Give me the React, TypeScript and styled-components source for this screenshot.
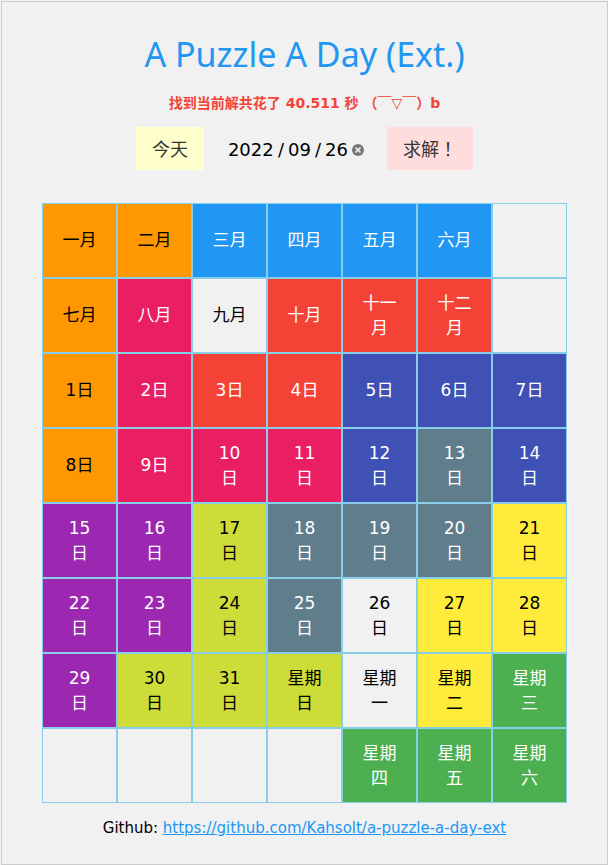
import React, { useState } from "react";
import styled, { createGlobalStyle } from "styled-components";

const GlobalStyle = createGlobalStyle`
  * { box-sizing: border-box; }
  html, body, #root { height: 100%; }
  body {
    margin: 0;
    background: #f1f1f1;
    color: #000;
    font-family: "DejaVu Sans", "Noto Sans CJK SC", sans-serif;
    font-size: 15px;
    line-height: 24px;
  }
`;

const Page = styled.main`
  display: flex;
  flex-direction: column;
  align-items: center;
  min-height: 100%;
  padding-top: 1px;
  padding-left: 1px;
`;

const Panel = styled.div`
  display: flex;
  flex-direction: column;
  align-items: center;
  flex: 1;
  width: 100%;
  padding: 25px 16px 16px;
  border: 1px solid #ccc;
`;

const Title = styled.h1`
  margin: 0;
  color: #2196f3;
  font-family: "Noto Sans", sans-serif;
  font-size: 34px;
  font-weight: 400;
  line-height: 54px;
`;

const Status = styled.p`
  margin: 10px 0 12px;
  color: #f44336;
  font-size: 14px;
  font-weight: 700;
  line-height: 24px;
  white-space: pre;
`;

const Toolbar = styled.form`
  display: flex;
  align-items: center;
  margin-bottom: 33px;
`;

const ActionButton = styled.button<{ $tone: string }>`
  padding: 9px 16px 7px;
  border: 0;
  background: ${(p) => p.$tone};
  color: #333;
  font: inherit;
  font-size: 18px;
  line-height: 27px;
  cursor: pointer;
`;

const CenteredMark = styled.span`
  font-family: "Noto Sans CJK TC", sans-serif;
  line-height: 1;
`;

const DateField = styled.fieldset`
  display: flex;
  align-items: center;
  gap: 4px;
  margin: 0;
  padding: 2px 23px 0 24px;
  border: 0;
  font-size: 18px;
`;

const DatePart = styled.input<{ $digits: number }>`
  width: ${(p) => (p.$digits === 4 ? 46 : 23)}px;
  padding: 0;
  border: 0;
  background: transparent;
  color: #000;
  font: inherit;
`;

const ClearButton = styled.button`
  display: flex;
  padding: 0;
  border: 0;
  background: none;
  cursor: pointer;
`;

const Board = styled.div`
  display: grid;
  grid-template-columns: repeat(7, minmax(0, 75px));
  grid-auto-rows: 75px;
  justify-content: center;
  width: 100%;
`;

const tones = {
  orange: ["#ff9800", "#000"],
  blue: ["#2196f3", "#fff"],
  pink: ["#e91e63", "#fff"],
  red: ["#f44336", "#fff"],
  indigo: ["#3f51b5", "#fff"],
  slate: ["#607d8b", "#fff"],
  purple: ["#9c27b0", "#fff"],
  lime: ["#cddc39", "#000"],
  yellow: ["#ffeb3b", "#000"],
  green: ["#4caf50", "#fff"],
  none: ["#f1f1f1", "#000"],
};

type Tone = keyof typeof tones;

const Cell = styled.div<{ $tone: Tone }>`
  display: flex;
  align-items: center;
  justify-content: center;
  padding: 0 18px;
  border: 1px solid #87ceeb;
  background: ${(p) => tones[p.$tone][0]};
  color: ${(p) => tones[p.$tone][1]};
  font-size: 17px;
  line-height: 25px;
  text-align: center;
`;

const Footer = styled.footer`
  margin-top: 13px;
`;

const RepoLink = styled.a`
  color: #2196f3;
`;

const cells: [string, Tone][] = [
  ["一月", "orange"], ["二月", "orange"], ["三月", "blue"], ["四月", "blue"], ["五月", "blue"], ["六月", "blue"], ["", "none"],
  ["七月", "orange"], ["八月", "pink"], ["九月", "none"], ["十月", "red"], ["十一月", "red"], ["十二月", "red"], ["", "none"],
  ["1日", "orange"], ["2日", "pink"], ["3日", "red"], ["4日", "red"], ["5日", "indigo"], ["6日", "indigo"], ["7日", "indigo"],
  ["8日", "orange"], ["9日", "pink"], ["10日", "pink"], ["11日", "pink"], ["12日", "indigo"], ["13日", "slate"], ["14日", "indigo"],
  ["15日", "purple"], ["16日", "purple"], ["17日", "lime"], ["18日", "slate"], ["19日", "slate"], ["20日", "slate"], ["21日", "yellow"],
  ["22日", "purple"], ["23日", "purple"], ["24日", "lime"], ["25日", "slate"], ["26日", "none"], ["27日", "yellow"], ["28日", "yellow"],
  ["29日", "purple"], ["30日", "lime"], ["31日", "lime"], ["星期日", "lime"], ["星期一", "none"], ["星期二", "yellow"], ["星期三", "green"],
  ["", "none"], ["", "none"], ["", "none"], ["", "none"], ["星期四", "green"], ["星期五", "green"], ["星期六", "green"],
];

export default function App() {
  const [date, setDate] = useState(["2022", "09", "26"]);
  const labels = ["年", "月", "日"];
  const today = () => {
    const now = new Date();
    setDate([
      String(now.getFullYear()),
      String(now.getMonth() + 1).padStart(2, "0"),
      String(now.getDate()).padStart(2, "0"),
    ]);
  };

  return (
    <>
      <GlobalStyle />
      <Page>
        <Panel>
          <Title>A Puzzle A Day (Ext.)</Title>
          <Status role="status">找到当前解共花了 40.511 秒 （￣▽￣）b</Status>
          <Toolbar onSubmit={(e) => e.preventDefault()}>
            <ActionButton type="button" $tone="#ffffcc" onClick={today}>今天</ActionButton>
            <DateField aria-label="日期">
              {date.map((part, i) => (
                <React.Fragment key={labels[i]}>
                  {i > 0 && <span>/</span>}
                  <DatePart
                    aria-label={labels[i]}
                    $digits={i === 0 ? 4 : 2}
                    maxLength={i === 0 ? 4 : 2}
                    value={part}
                    onChange={(e) => setDate(date.map((d, j) => (j === i ? e.target.value : d)))}
                  />
                </React.Fragment>
              ))}
              <ClearButton type="button" aria-label="清除" onClick={() => setDate(["", "", ""])}>
                <svg width="12" height="12" viewBox="0 0 12 12">
                  <circle cx="6" cy="6" r="6" fill="#767676" />
                  <path d="M3.5 3.5l5 5M8.5 3.5l-5 5" stroke="#f1f1f1" strokeWidth="1.7" />
                </svg>
              </ClearButton>
            </DateField>
            <ActionButton type="submit" $tone="#ffdddd">求解<CenteredMark>！</CenteredMark></ActionButton>
          </Toolbar>
          <Board>
            {cells.map(([text, tone], i) => (
              <Cell key={i} $tone={tone}>{text}</Cell>
            ))}
          </Board>
          <Footer>
            Github: <RepoLink href="https://github.com/Kahsolt/a-puzzle-a-day-ext">https://github.com/Kahsolt/a-puzzle-a-day-ext</RepoLink>
          </Footer>
        </Panel>
      </Page>
    </>
  );
}
